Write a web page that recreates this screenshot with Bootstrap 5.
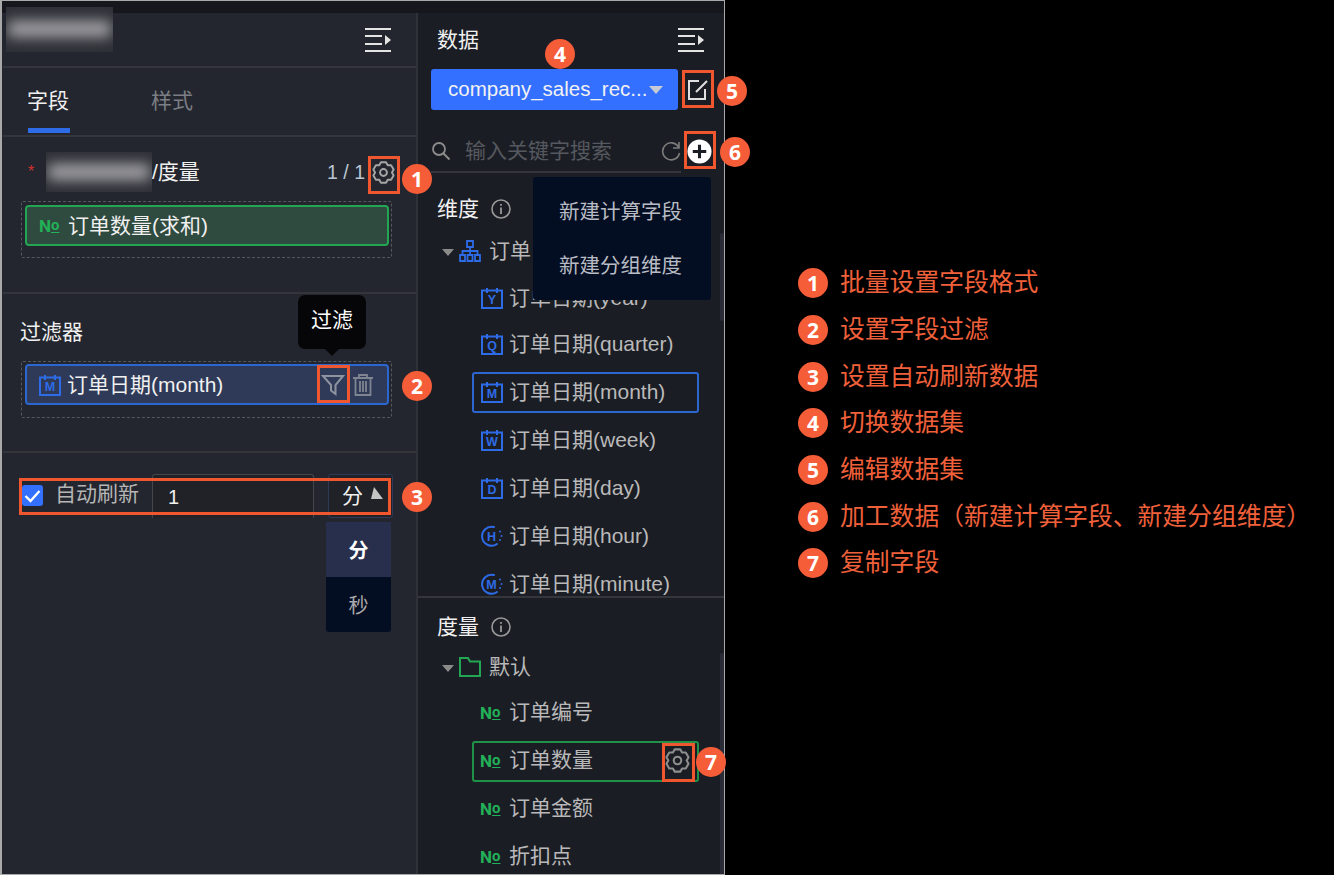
<!doctype html>
<html lang="zh"><head><meta charset="utf-8"><title>数据面板</title>
<link rel="stylesheet" href="https://cdn.jsdelivr.net/npm/bootstrap@5.3.0/dist/css/bootstrap.min.css">
<style>
html,body{height:100%;background:#000;overflow:hidden}
body{font-family:"Liberation Sans","Noto Sans CJK SC",sans-serif;color:#e6e6e6;font-size:21px;line-height:30px}
.stage{width:1334px;height:875px}
.appwin{position:relative;width:725px;height:875px;flex:none;border:1px solid #a9a9a9;border-left-width:2px;background:#15171c;padding-top:12px}
.leftp{width:416px;flex:none;background:#23262e;border-right:2px solid #2f3138;height:100%;padding-left:1px}
.rightp{flex:1;min-width:0;background:#1b1d24;height:100%;position:relative}
.head1{height:55px;border-bottom:2px solid #34363c;padding-right:24px}
.menuico{width:28px;height:26px;color:#e4e4e4}
.tabz{height:69px;border-bottom:2px solid #34363c;padding-left:25px;gap:82px}
.tabi{height:67px;padding-top:18px;width:42px;white-space:nowrap;color:#7b7e85;text-indent:-1px}
.tabi.onn{color:#f0f0f0;border-bottom:5px solid #2e6be6;height:65px;margin-top:0}
.sect{border-bottom:2px solid #34363c;padding:0 24px 0 18px}
.s1{height:157px}.s2{height:159px}
.blurbox{overflow:hidden;background:#2e3037;flex:none}
.blurbox i{display:block;height:16px;margin:14px 2px;background:#a7a5aa;filter:blur(7px)}
.blur1{width:107px;height:45px;position:absolute;left:4px;top:6px}
.blur2{width:106px;height:40px;margin-left:9px}
.blur2 i{margin:12px 2px}
.starr{color:#d3322f;font-size:16px;width:9px;margin-left:7px}
.countt{color:#b9c6d2;font-size:19.5px;white-space:nowrap}
.dropz{border:1px dashed #55575d;border-radius:2px;padding:3px 2px 0 3px;height:57px}
.dropz.tight{padding-top:2px}
.fielditem{height:41px;border-radius:4px;border:2px solid #22a653;background:#2f4a3e;padding-left:12px;color:#f0f0f0;white-space:nowrap}
.fielditem.blu{border-color:#2c66d0;background:#2e3a57;padding-right:14px}
.numg{font-family:Roboto,"Liberation Sans",sans-serif;font-weight:700;font-size:17px;color:#22b158;width:29px;flex:none;letter-spacing:0;line-height:20px}
.numg u{font-size:15px;text-underline-offset:2px;vertical-align:2px}
.calx{width:22px;height:22px;flex:none;margin-right:7px;color:#2e6be6}
.calx text{font:700 12.5px "Liberation Sans",sans-serif;fill:currentColor}
.ttl{color:#f0f0f0}
.autor{padding:21px 0 0 19px;position:relative}
.chkk{width:21px;height:21px;background:#3370ff;border-radius:3px;flex:none}
.labb{color:#b5b5b5;margin-left:12px;width:97px;white-space:nowrap}
.numinp{width:162px;height:44px;border:1px solid #44464c;border-bottom:0;border-radius:3px 3px 0 0;background:#202228;padding:7px 0 0 15px;color:#f0f0f0;font-size:20px}
.unitt{width:65px;height:44px;margin-left:14px;border:1px solid #2e3a57;border-radius:3px;background:#202228;padding:6px 0 0 13px;position:relative;color:#f0f0f0}
.tri1{position:absolute;right:9px;top:12px;width:0;height:0;border-left:3px solid transparent;border-right:9px solid transparent;border-bottom:12px solid #c4c4c4}
.optlist{width:65px;margin:4px 0 0 323px;border-radius:0 0 3px 3px;overflow:hidden}
.optt{height:55px;text-align:center;line-height:58px;background:#040e22;color:#aaa;font-size:20px}
.optt.act{background:#272f4d;color:#fff;font-weight:700}
.hd2{height:57px;padding:12px 19px 0 19px;color:#f0f0f0}
.dsrow{padding:0 0 0 13px;margin-top:-1px;height:41px}
.dsbtn{width:247px;height:41px;background:#3370ff;border-radius:3px;color:#f2f2f2;font-size:20.5px;padding-left:17px;white-space:nowrap;position:relative;line-height:40px}
.tri2{position:absolute;right:15px;top:17px;width:0;height:0;border:7px solid transparent;border-top:8px solid #c6cbd6;border-bottom:0}
.srch{margin:21px 0 0 13px;width:250px;height:42px;border-bottom:2px solid #34363c;color:#55585f;white-space:nowrap}
.dimsec{height:425px;overflow:hidden;border-bottom:2px solid #34363c;position:relative}
.feasec{height:276px;overflow:hidden;position:relative}
.sechd{height:30px;padding-left:19px;color:#f0f0f0;margin-top:20px}
.infoc{width:20px;height:20px;margin-left:12px;color:#9a9a9a}
.treer{height:48px;padding-left:24px;color:#b9b9b9;margin-top:3px;white-space:nowrap}
.arrowd{width:0;height:0;border:6px solid transparent;border-top:7px solid #8a8a8a;border-bottom:0;margin-right:5px;margin-top:3px}
.itm{height:48px;padding-left:62px;color:#b9b9b9;white-space:nowrap;position:relative}
.itm .calx{margin-left:1px;margin-right:6px}
.itm .numg{width:29px}
.itm.sel::before{content:"";position:absolute;left:54px;width:227px;top:4px;height:41px;border:2px solid #2c66d0;border-radius:3px}
.itm.selg::before{content:"";position:absolute;left:54px;width:227px;top:5px;height:41px;border:2px solid #1f9148;border-radius:3px}
.scrl{position:absolute;right:0;width:4px;background:#2a2d38;border-radius:2px}
.bdg{width:30px;height:30px;border-radius:50%;background:#f55d38;color:#fff;font:700 21px/30px "Open Sans","Liberation Sans",sans-serif;text-align:center;flex:none}
.ov{position:absolute}
.b1{left:400px;top:163px}.b2{left:400px;top:370px}.b3{left:400px;top:481px}.b4{left:543px;top:38px}.b5{left:715px;top:75px}.b6{left:718px;top:136px}.b7{left:694px;top:746px}
.rbox{position:absolute;border:3px solid #f0572f}
.r1{left:366px;top:155px;width:32px;height:38px}.r2{left:315px;top:364px;width:33px;height:38px}
.r3{left:17px;top:477px;width:372px;height:37px}.r4{left:680px;top:69px;width:32px;height:38px}
.r5{left:682px;top:130px;width:32px;height:38px}.r6{left:660px;top:742px;width:33px;height:39px}
.tipp{left:296px;top:294px;width:68px;height:54px;background:#060608;border-radius:7px;color:#fff;text-align:center;line-height:50px}
.tipp::after{content:"";position:absolute;left:27px;bottom:-7px;border:7px solid transparent;border-top:7px solid #060608;border-bottom:0}
.addm{left:531px;top:176px;width:178px;height:123px;background:#040e22;border-radius:3px;color:#b9bcc4;font-size:20.5px;padding:8px 3px 0 0;text-align:center}
.addm div{height:54px;line-height:54px}
.legendz{padding:260px 0 0 73px}
.legi{height:46.7px;color:#f0603a;font-size:24.8px;white-space:nowrap;gap:12px}
</style></head>
<body>
<svg width="0" height="0" class="position-absolute">
<symbol id="menuu" viewBox="0 0 28 26"><path d="M1 2h26M1 9h17M1 17h17M1 24h26" stroke="currentColor" stroke-width="2.200" fill="none"/><path d="M21 8l6 5-6 5z" fill="currentColor"/></symbol>
<symbol id="gearr" viewBox="0 0 24 24"><path d="M9.340 1.330H14.660L16.400 4.380 19.910 4.360 22.570 8.970 20.800 12 22.570 15.030 19.910 19.640 16.400 19.620 14.660 22.670H9.340L7.600 19.620 4.090 19.640 1.430 15.030 3.200 12 1.430 8.970 4.090 4.360 7.600 4.380Z" fill="none" stroke="currentColor" stroke-width="2" stroke-linejoin="round"/><circle cx="12" cy="12" r="3.600" fill="none" stroke="currentColor" stroke-width="2"/></symbol>
<symbol id="call" viewBox="0 0 22 22"><path d="M1 3.500h20V21H1zM6 1v5M16 1v5" fill="none" stroke="currentColor" stroke-width="2"/></symbol>
<symbol id="circc" viewBox="0 0 22 22"><path d="M13 2A9.500 9.500 0 1 0 16 19M19 6.500v.1M20.500 11v.1M19 15v.1" fill="none" stroke="currentColor" stroke-width="2" stroke-linecap="round"/></symbol>
<symbol id="infoo" viewBox="0 0 20 20"><circle cx="10" cy="10" r="9" fill="none" stroke="currentColor" stroke-width="1.600"/><path d="M10 8.500v6.500M10 5v1.800" stroke="currentColor" stroke-width="1.800"/></symbol>
</svg>
<div class="stage d-flex">
<div class="appwin">
<div class="d-flex h-100">
<div class="leftp d-flex flex-column">
<div class="head1 d-flex align-items-center justify-content-end">
<div class="blurbox blur1"><i></i></div>
<svg class="menuico"><use href="#menuu"/></svg>
</div>
<div class="tabz d-flex"><div class="tabi onn">字段</div><div class="tabi">样式</div></div>
<div class="sect s1">
<div class="d-flex align-items-center" style="height:64px;padding-top:6px">
<span class="starr">*</span><div class="blurbox blur2"><i></i></div><span class="ttl">/度量</span>
<span class="countt ms-auto" style="margin-right:7px">1 / 1</span>
<svg width="23" height="23" style="color:#a6a6a6;margin-right:-3px"><use href="#gearr"/></svg>
</div>
<div class="dropz">
<div class="fielditem d-flex align-items-center"><span class="numg">N<u>o</u></span>订单数量(求和)</div>
</div>
</div>
<div class="sect s2">
<div class="ttl" style="padding-top:23px;height:67px;text-indent:-1px">过滤器</div>
<div class="dropz tight">
<div class="fielditem blu d-flex align-items-center">
<svg class="calx" style="margin-right:6px"><use href="#call"/><text x="11" y="17" text-anchor="middle">M</text></svg>订单日期(month)
<svg class="ms-auto" width="24" height="24" viewBox="0 0 24 24" style="color:#8d939f"><path d="M2 3h20l-7.500 9v9L10 17.500V12z" fill="none" stroke="currentColor" stroke-width="2"/></svg>
<svg width="20" height="24" viewBox="0 0 20 24" style="color:#7f8590;margin-left:8px"><path d="M0 5h20M6 5V2h8v3M2.500 5v17h15V5M7 8v11M10 8v11M13 8v11" fill="none" stroke="currentColor" stroke-width="1.800"/></svg>
</div>
</div>
</div>
<div class="autor d-flex align-items-start">
<div class="chkk d-flex align-items-center justify-content-center" style="margin-top:11px"><svg width="17" height="14" viewBox="0 0 17 14"><path d="M1.500 7l5 5 9-10" fill="none" stroke="#fff" stroke-width="2.400"/></svg></div>
<span class="labb" style="margin-top:5px">自动刷新</span>
<div class="numinp">1</div>
<div class="unitt">分<span class="tri1"></span></div>
</div>
<div class="optlist"><div class="optt act">分</div><div class="optt">秒</div></div>
</div>
<div class="rightp d-flex flex-column">
<div class="hd2 d-flex justify-content-between align-items-start"><span>数据</span><svg class="menuico" style="margin-top:2px"><use href="#menuu"/></svg></div>
<div class="dsrow d-flex"><div class="dsbtn">company_sales_rec...<span class="tri2"></span></div>
<svg class="ov" width="20" height="20" viewBox="0 0 20 20" style="left:270px;top:67px;color:#e0e0e0"><path d="M17 9v10H1V1h10M19 1L8 12" fill="none" stroke="currentColor" stroke-width="2"/></svg></div>
<div class="srch d-flex align-items-center">
<svg width="20" height="20" viewBox="0 0 20 20" style="color:#8c8c8c;margin-right:14px;flex:none"><circle cx="8" cy="8" r="6" fill="none" stroke="currentColor" stroke-width="1.800"/><path d="M12.500 12.500l6 6" stroke="currentColor" stroke-width="2"/></svg>
<span>输入关键字搜索</span>
<svg class="ms-auto" width="20" height="20" viewBox="0 0 20 20" style="color:#7d7d7d"><path d="M17.500 6A8.500 8.500 0 1 0 18.500 12M18 1v6h-6" fill="none" stroke="currentColor" stroke-width="1.600"/></svg>
</div>
<div class="dimsec">
<div class="sechd d-flex align-items-center" style="margin-top:21px">维度<svg class="infoc"><use href="#infoo"/></svg></div>
<div class="treer d-flex align-items-center"><span class="arrowd"></span><svg width="22" height="22" viewBox="0 0 22 22" style="color:#2e6be6;margin-right:8px"><path d="M8 1h6v6H8zM1 15h5v6H1zM8.500 15h5v6h-5zM16 15h5v6h-5zM3.500 15v-4h15v4M11 7v8" fill="none" stroke="currentColor" stroke-width="1.800"/></svg>订单</div>
<div class="itm d-flex align-items-center" style="margin-top:1px;height:44px"><svg class="calx"><use href="#call"/><text x="11" y="17" text-anchor="middle">Y</text></svg>订单日期(year)</div>
<div class="itm d-flex align-items-center"><svg class="calx"><use href="#call"/><text x="11" y="17" text-anchor="middle">Q</text></svg>订单日期(quarter)</div>
<div class="itm sel d-flex align-items-center"><svg class="calx"><use href="#call"/><text x="11" y="17" text-anchor="middle">M</text></svg>订单日期(month)</div>
<div class="itm d-flex align-items-center"><svg class="calx"><use href="#call"/><text x="11" y="17" text-anchor="middle">W</text></svg>订单日期(week)</div>
<div class="itm d-flex align-items-center"><svg class="calx"><use href="#call"/><text x="11" y="17" text-anchor="middle">D</text></svg>订单日期(day)</div>
<div class="itm d-flex align-items-center"><svg class="calx"><use href="#circc"/><text x="10.500" y="15.500" text-anchor="middle">H</text></svg>订单日期(hour)</div>
<div class="itm d-flex align-items-center"><svg class="calx"><use href="#circc"/><text x="10.500" y="15.500" text-anchor="middle">M</text></svg>订单日期(minute)</div>
<div class="scrl" style="top:60px;height:88px"></div>
</div>
<div class="feasec">
<div class="sechd d-flex align-items-center" style="margin-top:14px">度量<svg class="infoc"><use href="#infoo"/></svg></div>
<div class="treer d-flex align-items-center" style="margin-top:4px;height:42px"><span class="arrowd"></span><svg width="22" height="20" viewBox="0 0 22 20" style="color:#22a653;margin-right:8px"><path d="M1 1h8l2 3.500h10V19H1z" fill="none" stroke="currentColor" stroke-width="2"/></svg>默认</div>
<div class="itm d-flex align-items-center"><span class="numg">N<u>o</u></span>订单编号</div>
<div class="itm selg d-flex align-items-center"><span class="numg">N<u>o</u></span>订单数量
<svg class="ov" width="25" height="25" style="left:247px;top:12px;color:#8e8e8e"><use href="#gearr"/></svg></div>
<div class="itm d-flex align-items-center"><span class="numg">N<u>o</u></span>订单金额</div>
<div class="itm d-flex align-items-center"><span class="numg">N<u>o</u></span>折扣点</div>
<div class="scrl" style="top:55px;height:225px"></div>
</div>
</div>
</div>
<div class="ov tipp">过滤</div>
<div class="ov addm"><div>新建计算字段</div><div>新建分组维度</div></div>
<svg class="ov" width="25" height="25" viewBox="0 0 26 26" style="left:685px;top:138px"><circle cx="13" cy="13" r="12.500" fill="#fff"/><path d="M13 6v14M6 13h14" stroke="#1b1d24" stroke-width="3.200"/></svg>
<div class="rbox r1"></div><div class="rbox r2"></div><div class="rbox r3"></div><div class="rbox r4"></div><div class="rbox r5"></div><div class="rbox r6"></div>
<div class="ov bdg b1">1</div><div class="ov bdg b2">2</div><div class="ov bdg b3">3</div><div class="ov bdg b4">4</div><div class="ov bdg b5">5</div><div class="ov bdg b6">6</div><div class="ov bdg b7">7</div>
</div>
<div class="legendz flex-grow-1">
<div class="legi d-flex align-items-center"><span class="bdg">1</span>批量设置字段格式</div>
<div class="legi d-flex align-items-center"><span class="bdg">2</span>设置字段过滤</div>
<div class="legi d-flex align-items-center"><span class="bdg">3</span>设置自动刷新数据</div>
<div class="legi d-flex align-items-center"><span class="bdg">4</span>切换数据集</div>
<div class="legi d-flex align-items-center"><span class="bdg">5</span>编辑数据集</div>
<div class="legi d-flex align-items-center"><span class="bdg">6</span>加工数据（新建计算字段、新建分组维度）</div>
<div class="legi d-flex align-items-center"><span class="bdg">7</span>复制字段</div>
</div>
</div>
<script src="https://cdn.jsdelivr.net/npm/bootstrap@5.3.0/dist/js/bootstrap.bundle.min.js"></script>
</body></html>
